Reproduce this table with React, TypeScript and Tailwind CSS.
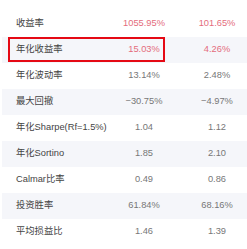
const rows = [
  { label: '收益率', a: '1055.95%', b: '101.65%', red: true },
  { label: '年化收益率', a: '15.03%', b: '4.26%', red: true, boxed: true },
  { label: '年化波动率', a: '13.14%', b: '2.48%' },
  { label: '最大回撤', a: '−30.75%', b: '−4.97%' },
  { label: '年化Sharpe(Rf=1.5%)', a: '1.04', b: '1.12' },
  { label: '年化Sortino', a: '1.85', b: '2.10' },
  { label: 'Calmar比率', a: '0.49', b: '0.86' },
  { label: '投资胜率', a: '61.84%', b: '68.16%' },
  { label: '平均损益比', a: '1.46', b: '1.39' },
];

export default function App() {
  return (
    <div
      className="w-[247px] h-[249px] bg-white overflow-hidden pt-[11px] pl-[2px]"
      style={{ fontFamily: '"Liberation Sans", "Noto Sans CJK SC", sans-serif' }}
    >
      {rows.map((r, i) => (
        <div
          key={r.label}
          className={`relative grid grid-cols-[102px_80px_1fr] h-[26px] items-center text-[9.3px] ${
            i % 2 === 1 ? 'bg-[#f5f6fa]' : 'bg-white'
          }`}
        >
          {r.boxed && (
            <div className="absolute left-[6px] top-0 w-[157px] h-[25px] border-2 border-[#e50914]" />
          )}
          <div className="pl-[14px] text-[#444] whitespace-nowrap">{r.label}</div>
          <div className={`text-center ${r.red ? 'text-[#e46c7c]' : 'text-[#777]'}`}>{r.a}</div>
          <div className={`text-center pl-[3px] ${r.red ? 'text-[#e46c7c]' : 'text-[#777]'}`}>{r.b}</div>
        </div>
      ))}
    </div>
  );
}
